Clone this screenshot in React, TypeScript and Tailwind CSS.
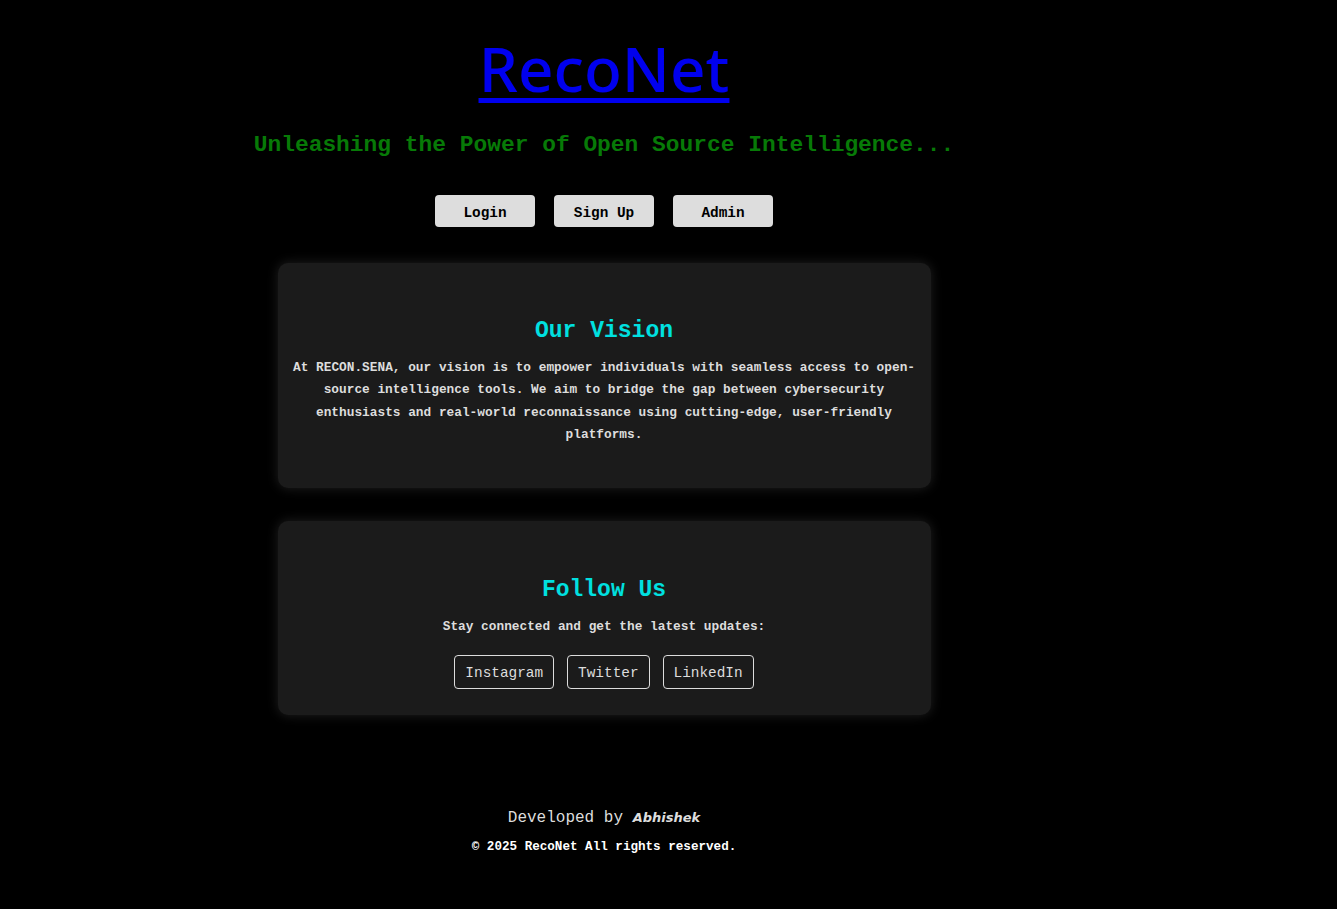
import React from 'react';

const mono = { fontFamily: '"Liberation Mono", "DejaVu Sans Mono", monospace' };

const NAV_BUTTONS = ['Login', 'Sign Up', 'Admin'];
const SOCIAL_LINKS = ['Instagram', 'Twitter', 'LinkedIn'];

const App: React.FC = () => {
  return (
    <div className="min-h-[909px] w-full bg-black" style={mono}>
      <div className="flex w-[1208px] flex-col items-center">
        {/* Header */}
        <h1
          className="mt-[32px] text-[62px] font-medium leading-[72px] text-[#0000ee] underline decoration-[5px] underline-offset-[6px]"
          style={{ fontFamily: '"Comic Sans MS", "Noto Sans", sans-serif' }}
        >
          <a href="#">RecoNet</a>
        </h1>
        <h2 className="mt-[27px] text-[22.9px] font-bold leading-[28px] text-[#077a07]">
          Unleashing the Power of Open Source Intelligence...
        </h2>
        <div className="mt-[36px] flex gap-[19px]">
          {NAV_BUTTONS.map((label) => (
            <button
              key={label}
              className="h-[32px] w-[100px] rounded-[4px] bg-[#dddddd] pt-[5px] text-[14.4px] font-bold text-black"
            >
              {label}
            </button>
          ))}
        </div>

        {/* Vision card */}
        <section className="mt-[36px] flex w-[653px] flex-col items-center rounded-[10px] bg-[#1b1b1b] px-[14px] pt-[55px] pb-[41px] shadow-[0_0_12px_rgba(45,45,45,0.7)]">
          <h2 className="text-[23px] font-bold leading-[26px] text-[#00e0e0]">Our Vision</h2>
          <p className="mt-[13px] text-center text-[12.8px] font-bold leading-[22.4px] text-[#dddddd]">
            At RECON.SENA, our vision is to empower individuals with seamless access to open-source
            intelligence tools. We aim to bridge the gap between cybersecurity enthusiasts and
            real-world reconnaissance using cutting-edge, user-friendly platforms.
          </p>
        </section>

        {/* Follow card */}
        <section className="mt-[33px] flex w-[653px] flex-col items-center rounded-[10px] bg-[#1b1b1b] px-[14px] pt-[56px] pb-[26px] shadow-[0_0_12px_rgba(45,45,45,0.7)]">
          <h2 className="text-[23px] font-bold leading-[26px] text-[#00e0e0]">Follow Us</h2>
          <p className="mt-[13px] text-[12.8px] font-bold leading-[22px] text-[#dddddd]">
            Stay connected and get the latest updates:
          </p>
          <div className="mt-[17px] flex gap-[13px]">
            {SOCIAL_LINKS.map((label) => (
              <a
                key={label}
                href="#"
                className="flex h-[34px] items-center rounded-[4px] border border-[#dddddd] px-[10px] pt-[5px] text-[14.4px] text-[#dddddd]"
              >
                {label}
              </a>
            ))}
          </div>
        </section>

        {/* Footer */}
        <footer className="mt-[91px] flex flex-col items-center text-[#dddddd]">
          <p className="text-[16px] leading-[24px]">
            Developed by{' '}
            <span
              className="text-[13px] font-bold italic"
              style={{ fontFamily: '"DejaVu Sans", "Noto Sans", sans-serif' }}
            >
              Abhishek
            </span>
          </p>
          <p className="mt-[7px] text-[12.6px] font-bold leading-[20px] text-white">
            © 2025 RecoNet All rights reserved.
          </p>
        </footer>
      </div>
    </div>
  );
};

export default App;
